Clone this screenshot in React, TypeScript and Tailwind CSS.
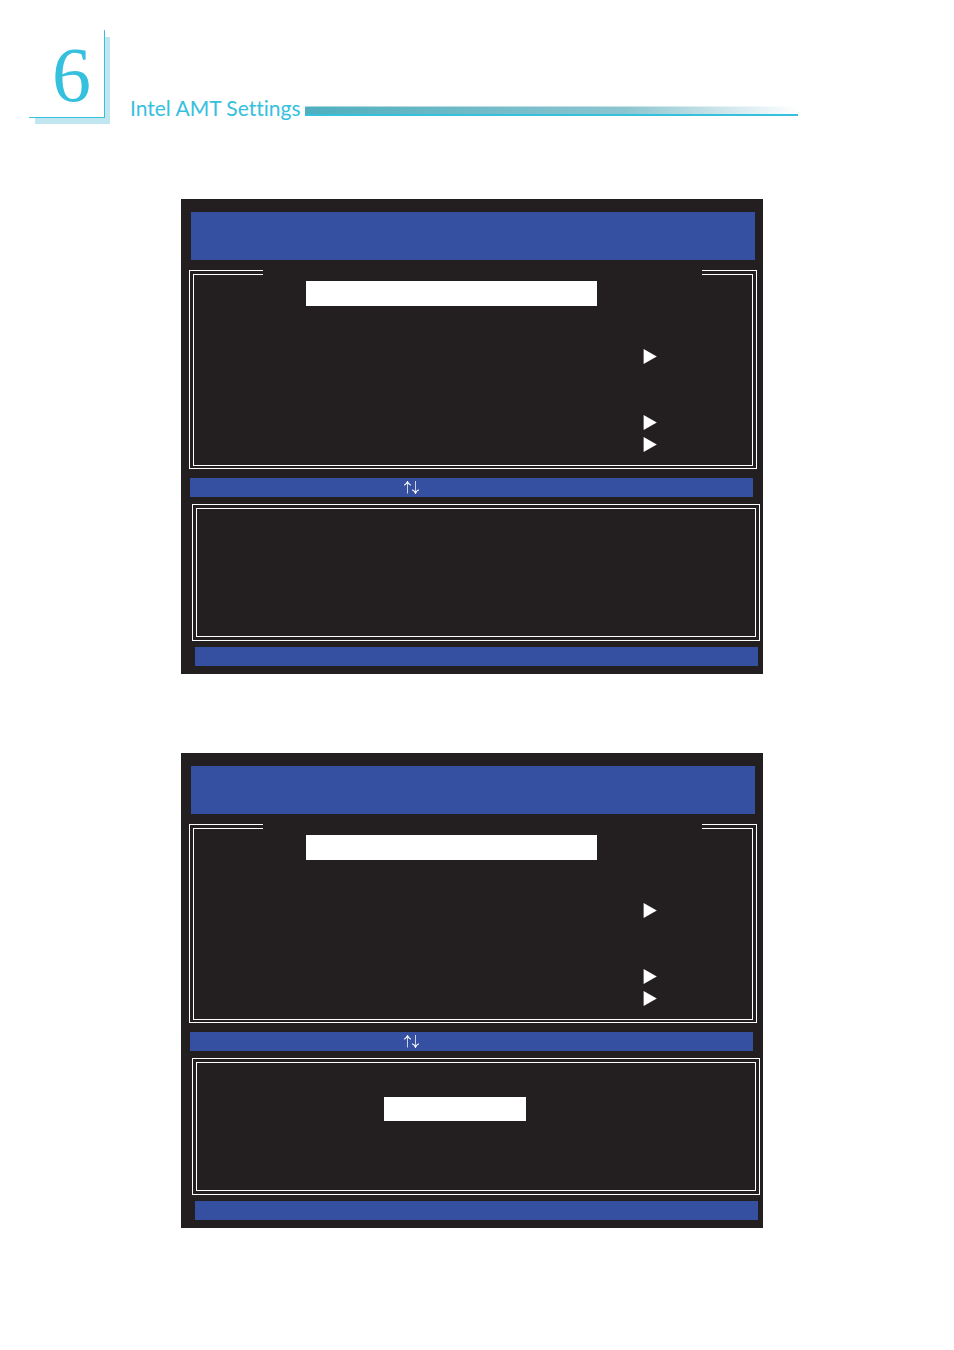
import React from 'react';

interface ScreenProps {
  label: string;
  hasPrompt?: boolean;
}

// Rows of the menu, true where the row opens a submenu
const menuRows = [true, false, false, true, true];

const ChapterHeader: React.FC = () => (
  <header className="flex items-start pl-[29px] pr-[156px] pt-[30px] text-[#35c0de]">
    <div className="relative h-[88px] w-[76px] shrink-0">
      <div className="absolute -bottom-[6px] -right-[5px] left-[6px] top-[7px] bg-[#c0e6ef]" />
      <div className="relative flex h-full justify-center border-b border-r border-[#35c0de] bg-white pl-[10px] font-['Liberation_Serif',serif] text-[78px] leading-[90px]">
        6
      </div>
    </div>
    <div className="flex flex-1 items-end pl-[25px] pt-[62px]">
      <h1 className="shrink-0 whitespace-nowrap pr-1 font-['Lato',sans-serif] text-[21px] leading-8 [font-variant-ligatures:none]">
        Intel AMT Settings
      </h1>
      <div className="mb-2 flex-1 border-b-2 border-[#35c0de]">
        <div className="h-2 border-t border-white/50 bg-linear-to-r from-[#4eafbe] via-[#8cc5d0] via-65% to-white" />
      </div>
    </div>
  </header>
);

const Triangle: React.FC = () => (
  <svg width="14" height="15" viewBox="0 0 14 15" fill="white" aria-hidden="true">
    <path d="M0.6 0L13.8 7.5L0.6 15Z" />
  </svg>
);

const UpDownArrows: React.FC = () => (
  <svg width="17" height="13" viewBox="0 0 17 13" fill="none" stroke="white" role="img" aria-label="Up and down">
    <path d="M4.5 1V12.5M12.5 0V12" strokeWidth="1" strokeOpacity="0.75" />
    <path d="M1.2 4.2Q3.6 3 4.5 0.8Q5.4 3 7.8 4.2M9.2 8.8Q11.6 10 12.5 12.2Q13.4 10 15.8 8.8" strokeWidth="1.1" />
  </svg>
);

const Screen: React.FC<ScreenProps> = ({ label, hasPrompt }) => (
  <section aria-label={label} className="bg-[#231f20] pb-2 pt-[13px]">
    <div className="ml-[10px] mr-2 h-12 bg-[#354fa1]" />

    <div className="relative ml-2 mr-[6px] mt-[10px] border border-white px-[3px] pb-[2px] pt-[3px]">
      {/* opening in the top edge of the frame */}
      <div className="absolute -top-px left-[73px] right-[54px] h-[5px] bg-[#231f20]" />
      <div className="h-[192px] border border-white pt-[6px]">
        <div className="ml-[112px] mr-[155px] h-[25px] bg-white" />
        <ul className="mt-[43px] pr-[95px]">
          {menuRows.map((hasSubmenu, i) => (
            <li key={i} className="flex h-[22px] items-start justify-end">
              {hasSubmenu && <Triangle />}
            </li>
          ))}
        </ul>
      </div>
    </div>

    <div className="ml-[9px] mr-[10px] mt-[9px] flex h-[19px] items-center bg-[#354fa1] pl-[213px]">
      <UpDownArrows />
    </div>

    <div className="ml-[11px] mr-[3px] mt-[7px] border border-white p-[3px]">
      <div className="h-[129px] border border-white pt-[34px]">
        {hasPrompt && <div className="ml-[187px] h-6 w-[142px] bg-white" />}
      </div>
    </div>

    <div className="ml-[14px] mr-[5px] mt-[6px] h-[19px] bg-[#354fa1]" />
  </section>
);

const App: React.FC = () => {
  return (
    <div className="min-h-screen bg-white">
      <ChapterHeader />
      <main className="flex flex-col gap-[79px] pb-[122px] pl-[181px] pr-[191px] pt-[75px]">
        <Screen label="Menu" />
        <Screen label="Menu with prompt" hasPrompt />
      </main>
    </div>
  );
};

export default App;
